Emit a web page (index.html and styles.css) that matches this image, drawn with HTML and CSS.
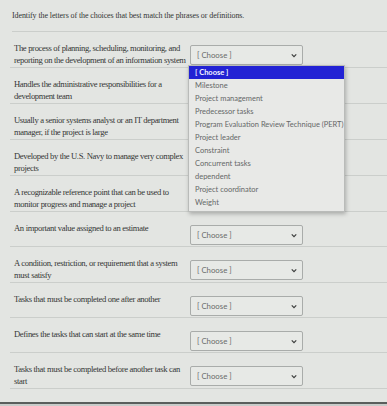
FILE: index.html
```html
<!DOCTYPE html>
<html>

<head>
    <meta charset="utf-8">
    <meta name="viewport" content="width=device-width">
    <link rel="stylesheet" href="styles.css">
</head>

<body>
    <div class="quiz">
        <p class="prompt">Identify the letters of the choices that best match the phrases or definitions.</p>
        <div class="item">
            <div class="phrase">The process of planning, scheduling, monitoring, and<br>reporting on the development of an information system</div>
            <div class="answer">
                <div class="select open">[ Choose ]<svg class="chevron" viewBox="0 0 8 6"><path d="M1 1.5 L4 4.5 L7 1.5" /></svg></div>
                <ul class="options">
                    <li class="active">[ Choose ]</li>
                    <li>Milestone</li>
                    <li>Project management</li>
                    <li>Predecessor tasks</li>
                    <li>Program Evaluation Review Technique (PERT)</li>
                    <li>Project leader</li>
                    <li>Constraint</li>
                    <li>Concurrent tasks</li>
                    <li>dependent</li>
                    <li>Project coordinator</li>
                    <li>Weight</li>
                </ul>
            </div>
        </div>
        <div class="item">
            <div class="phrase">Handles the administrative responsibilities for a<br>development team</div>
            <div class="answer"></div>
        </div>
        <div class="item">
            <div class="phrase">Usually a senior systems analyst or an IT department<br>manager, if the project is large</div>
            <div class="answer"></div>
        </div>
        <div class="item">
            <div class="phrase">Developed by the U.S. Navy to manage very complex<br>projects</div>
            <div class="answer"></div>
        </div>
        <div class="item">
            <div class="phrase">A recognizable reference point that can be used to<br>monitor progress and manage a project</div>
            <div class="answer"></div>
        </div>
        <div class="item">
            <div class="phrase">An important value assigned to an estimate</div>
            <div class="answer"><div class="select">[ Choose ]<svg class="chevron" viewBox="0 0 8 6"><path d="M1 1.5 L4 4.5 L7 1.5" /></svg></div></div>
        </div>
        <div class="item">
            <div class="phrase">A condition, restriction, or requirement that a system<br>must satisfy</div>
            <div class="answer"><div class="select">[ Choose ]<svg class="chevron" viewBox="0 0 8 6"><path d="M1 1.5 L4 4.5 L7 1.5" /></svg></div></div>
        </div>
        <div class="item">
            <div class="phrase">Tasks that must be completed one after another</div>
            <div class="answer"><div class="select">[ Choose ]<svg class="chevron" viewBox="0 0 8 6"><path d="M1 1.5 L4 4.5 L7 1.5" /></svg></div></div>
        </div>
        <div class="item">
            <div class="phrase">Defines the tasks that can start at the same time</div>
            <div class="answer"><div class="select">[ Choose ]<svg class="chevron" viewBox="0 0 8 6"><path d="M1 1.5 L4 4.5 L7 1.5" /></svg></div></div>
        </div>
        <div class="item">
            <div class="phrase">Tasks that must be completed before another task can<br>start</div>
            <div class="answer"><div class="select">[ Choose ]<svg class="chevron" viewBox="0 0 8 6"><path d="M1 1.5 L4 4.5 L7 1.5" /></svg></div></div>
        </div>
    </div>
    <div class="bezel"></div>
</body>

</html>
```

FILE: styles.css
```css
body {
    margin: 0;
    background: #e3e5e2;
    font-family: "Liberation Serif", "Times New Roman", serif;
    color: #343635;
    overflow: hidden;
}

.quiz {
    box-sizing: border-box;
    padding: 10px 0 0 10px;
    height: 402px;
}

.prompt {
    margin: 0 0 0 2px;
    padding-bottom: 9px;
    font-size: 8px;
    line-height: 12px;
    letter-spacing: -0.1px;
    border-bottom: 1px solid #cbcecb;
}

.item {
    display: flex;
    padding: 11px 0 1px 4px;
    border-bottom: 1px solid #cbcecb;
}

.phrase {
    width: 176px;
    font-size: 8.6px;
    line-height: 11.5px;
    letter-spacing: -0.34px;
    white-space: nowrap;
}

.answer {
    position: relative;
    padding-top: 2px;
}

.select {
    display: flex;
    align-items: center;
    justify-content: space-between;
    box-sizing: border-box;
    width: 113px;
    height: 20px;
    padding: 0 5px 0 6px;
    border: 1px solid #a9acaa;
    border-radius: 2px;
    background: #e7e9e6;
    font-family: Lato, "Liberation Sans", sans-serif;
    font-size: 7.8px;
    color: #6a6c6b;
}

.chevron {
    width: 6px;
    height: 5px;
}

.chevron path {
    fill: none;
    stroke: #3c3e3d;
    stroke-width: 1.6;
}

.options {
    position: absolute;
    top: 22px;
    left: -2px;
    width: 155px;
    margin: 0;
    padding: 0 0 2px;
    list-style: none;
    background: #e8e9e7;
    border: 1px solid #b9bbb9;
    box-shadow: 1px 2px 4px rgba(0, 0, 0, 0.25);
    font-family: Lato, "Liberation Sans", sans-serif;
    font-size: 7.5px;
    color: #666867;
    z-index: 2;
}

.options li {
    height: 13px;
    line-height: 13px;
    padding-left: 6px;
    white-space: nowrap;
}

.options li.active {
    background: #2222d4;
    color: #f2f2ff;
    font-weight: bold;
}

.bezel {
    height: 14px;
    border-top: 2px solid #5a5e5c;
    background: #c9ccca;
}
```
